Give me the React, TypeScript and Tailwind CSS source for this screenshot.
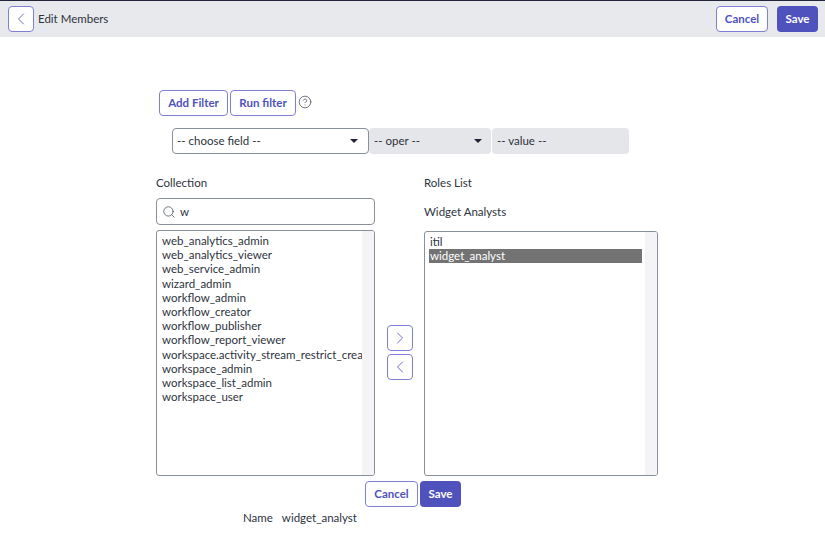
import { ChevronLeft, ChevronRight, Search, CircleHelp } from "lucide-react";

const collection = [
    "web_analytics_admin",
    "web_analytics_viewer",
    "web_service_admin",
    "wizard_admin",
    "workflow_admin",
    "workflow_creator",
    "workflow_publisher",
    "workflow_report_viewer",
    "workspace.activity_stream_restrict_create",
    "workspace_admin",
    "workspace_list_admin",
    "workspace_user",
];

const outlineBtn = "rounded-[4px] border border-[#7f7fd5] bg-white font-bold text-[#4f52bd] text-[11.5px] flex items-center justify-center";
const saveBtn = "rounded-[4px] bg-[#4f52bd] font-bold text-white text-[11.5px] flex items-center justify-center";

const Caret = () => (
    <div className="w-0 h-0 border-l-[4px] border-r-[4px] border-t-[4px] border-l-transparent border-r-transparent border-t-[#1f2333]" />
);

export default function App() {
    return (
        <div className="w-[825px] h-[534px] overflow-hidden bg-white font-['Lato',sans-serif] text-[11.5px] text-[#2e3340]">
            <div className="h-[37px] border-t border-[#23263a] bg-[#e8e9ed] flex items-center pl-2 pr-[7px]">
                <button className={`${outlineBtn} w-[26px] h-[26px]`}>
                    <ChevronLeft size={20} strokeWidth={1} />
                </button>
                <span className="ml-1">Edit Members</span>
                <button className={`${outlineBtn} ml-auto w-[52px] h-[26px]`}>Cancel</button>
                <button className={`${saveBtn} ml-[9px] w-[41px] h-[26px]`}>Save</button>
            </div>

            <div className="pl-[159px] pt-[53px] flex items-center gap-[2px]">
                <button className={`${outlineBtn} w-[69px] h-[26px]`}>Add Filter</button>
                <button className={`${outlineBtn} w-[66px] h-[26px]`}>Run filter</button>
                <CircleHelp size={14} strokeWidth={1.2} className="-mt-[2px] text-[#3a3f4d]" />
            </div>

            <div className="pl-[172px] pt-3 flex">
                <div className="w-[197px] h-[26px] rounded-[4px] border border-[#8a8f9c] flex items-center justify-between pl-1 pr-[10px]">
                    <span>-- choose field --</span>
                    <Caret />
                </div>
                <div className="w-[122px] h-[26px] rounded-[4px] bg-[#e5e6ea] flex items-center justify-between pl-[5px] pr-[9px]">
                    <span>-- oper --</span>
                    <Caret />
                </div>
                <div className="ml-px w-[137px] h-[26px] rounded-[4px] bg-[#e5e6ea] flex items-center pl-[5px]">
                    -- value --
                </div>
            </div>

            <div className="pl-[156px] pt-[21px] flex">
                <div className="w-[219px]">
                    <div className="h-[15px] leading-[15px]">Collection</div>
                    <div className="mt-[8px] h-[27px] rounded-[4px] border border-[#8a8f9c] flex items-center pl-[5px]">
                        <Search size={14} strokeWidth={1.2} className="text-[#3a3f4d]" />
                        <span className="ml-[4px]">w</span>
                    </div>
                    <div className="mt-[5px] h-[246px] rounded-[3px] border border-[#8a8f9c] flex overflow-hidden">
                        <div className="flex-1 min-w-0 overflow-hidden pl-[5px] pt-[3px] leading-[14.2px] whitespace-nowrap">
                            {collection.map((role) => (
                                <div key={role}>{role}</div>
                            ))}
                        </div>
                        <div className="w-[12px] bg-[#f4f4f6]" />
                    </div>
                </div>

                <div className="w-[49px] flex flex-col items-center gap-[3px] pt-[150px]">
                    <button className={`${outlineBtn} w-[26px] h-[26px]`}>
                        <ChevronRight size={20} strokeWidth={1} />
                    </button>
                    <button className={`${outlineBtn} w-[26px] h-[26px]`}>
                        <ChevronLeft size={20} strokeWidth={1} />
                    </button>
                </div>

                <div className="w-[234px]">
                    <div className="h-[15px] leading-[15px]">Roles List</div>
                    <div className="mt-[14px] h-[15px] leading-[15px]">Widget Analysts</div>
                    <div className="mt-[12px] h-[245px] rounded-[3px] border border-[#8a8f9c] flex overflow-hidden">
                        <div className="flex-1 min-w-0 pl-1 pt-[3px] leading-[14.2px]">
                            <div className="pl-px">itil</div>
                            <div className="bg-[#737373] text-white pl-px">widget_analyst</div>
                        </div>
                        <div className="w-[12px] ml-[3px] bg-[#f4f4f6]" />
                    </div>
                </div>
            </div>

            <div className="pl-[365px] pt-[5px] flex gap-[2px]">
                <button className={`${outlineBtn} w-[53px] h-[26px]`}>Cancel</button>
                <button className={`${saveBtn} w-[41px] h-[26px]`}>Save</button>
            </div>

            <div className="pl-[243px] pt-[3px] flex leading-[15px]">
                <span>Name</span>
                <span className="ml-[9px]">widget_analyst</span>
            </div>
        </div>
    );
}
